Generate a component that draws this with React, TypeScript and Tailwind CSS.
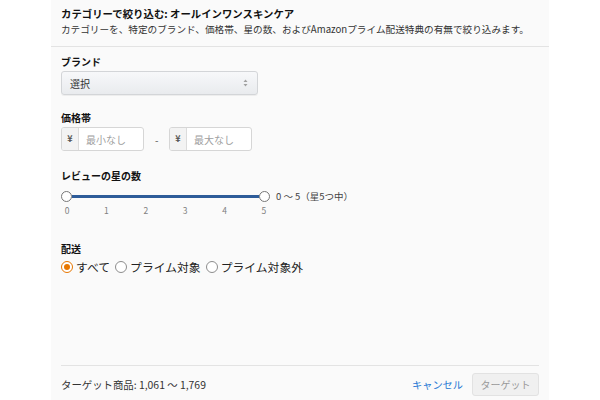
import React from "react";

const font = { fontFamily: '"Noto Sans CJK JP", "Noto Sans", sans-serif' };

function Radio({ checked, label }: { checked?: boolean; label: string }) {
  return (
    <div className="flex items-center gap-[3px]">
      <span
        className={
          "flex h-[12px] w-[12px] items-center justify-center rounded-full border bg-white " +
          (checked ? "border-[#e77600]" : "border-[#8d8d8d]")
        }
      >
        {checked && <span className="h-[6px] w-[6px] rounded-full bg-[#e77600]" />}
      </span>
      <span className="text-[11.8px] leading-[14px] text-[#222]">{label}</span>
    </div>
  );
}

function PriceInput({ placeholder }: { placeholder: string }) {
  return (
    <div className="flex h-[24px] w-[83px] overflow-hidden rounded-[3px] border border-[#d6d6d6] bg-white">
      <div className="flex w-[17px] items-center justify-center border-r border-[#dcdcdc] bg-[#f3f3f3] text-[9px] font-bold text-[#555]">
        ¥
      </div>
      <div className="flex items-center pl-[7px] text-[10px] text-[#a0a0a0]">{placeholder}</div>
    </div>
  );
}

export default function App() {
  return (
    <div className="flex h-[400px] w-[600px] bg-white" style={font}>
      <div className="ml-[51px] flex h-[400px] w-[498px] flex-col bg-[#fafafa]">
        <div className="h-[47px] border-b border-[#e3e3e3] px-[10px] pt-[7px]">
          <div className="text-[10.4px] font-bold leading-[14px] text-[#111]">
            カテゴリーで絞り込む: オールインワンスキンケア
          </div>
          <div className="mt-[1px] text-[9.65px] leading-[14px] text-[#333]">
            カテゴリーを、特定のブランド、価格帯、星の数、およびAmazonプライム配送特典の有無で絞り込みます。
          </div>
        </div>

        <div className="flex flex-col px-[10px]">
          <div className="mt-[8px] text-[10px] font-bold leading-[14px] text-[#111]">ブランド</div>
          <div className="mt-[2px] flex h-[24px] w-[197px] items-center justify-between rounded-[3px] border border-[#d3d5d8] bg-gradient-to-b from-[#f7f8fa] to-[#e9ebee] pl-[8px] pr-[9px] shadow-[0_1px_0_rgba(0,0,0,0.05)]">
            <span className="text-[10px] text-[#333]">選択</span>
            <svg width="5" height="8" viewBox="0 0 5 8">
              <path d="M2.5 0.5 L4.5 3 L0.5 3 Z" fill="#a0a0a0" />
              <path d="M2.5 7.5 L4.5 5 L0.5 5 Z" fill="#a0a0a0" />
            </svg>
          </div>

          <div className="mt-[16px] text-[10px] font-bold leading-[14px] text-[#111]">価格帯</div>
          <div className="mt-[2px] flex items-center">
            <PriceInput placeholder="最小なし" />
            <span className="mx-[11px] w-[3px] text-[10px] text-[#555]">-</span>
            <PriceInput placeholder="最大なし" />
          </div>

          <div className="mt-[18px] text-[10px] font-bold leading-[14px] text-[#111]">レビューの星の数</div>
          <div className="mt-[7px] flex h-[12px] items-center">
            <div className="flex w-[209px] items-center">
              <span className="h-[11px] w-[11px] shrink-0 rounded-full border border-[#777] bg-white" />
              <span className="h-[3px] flex-1 bg-[#2e5c99]" />
              <span className="h-[11px] w-[11px] shrink-0 rounded-full border border-[#777] bg-white" />
            </div>
            <span className="ml-[6px] text-[9.5px] text-[#444]">0 ～ 5（星5つ中）</span>
          </div>
          <div className="mt-[3px] flex w-[209px] justify-between text-[8.5px] leading-[10px] text-[#808080]">
            {["0", "1", "2", "3", "4", "5"].map((t) => (
              <span key={t} className="w-[12px] text-center">
                {t}
              </span>
            ))}
          </div>

          <div className="mt-[27px] text-[10px] font-bold leading-[14px] text-[#111]">配送</div>
          <div className="mt-[4px] flex items-center gap-[5px]">
            <Radio checked label="すべて" />
            <Radio label="プライム対象" />
            <Radio label="プライム対象外" />
          </div>
        </div>

        <div className="flex-1" />

        <div className="mx-[10px] flex items-center justify-between border-t border-[#e3e3e3] pb-[4px] pt-[7px]">
          <span className="text-[10.4px] text-[#333]">ターゲット商品: 1,061 ～ 1,769</span>
          <div className="flex items-center gap-[9px]">
            <span className="text-[10.2px] text-[#2377d4]">キャンセル</span>
            <div className="flex h-[23px] w-[67px] items-center justify-center rounded-[3px] border border-[#e2e2e2] bg-[#f0f0f0] text-[10px] text-[#999]">
              ターゲット
            </div>
          </div>
        </div>
      </div>
    </div>
  );
}
